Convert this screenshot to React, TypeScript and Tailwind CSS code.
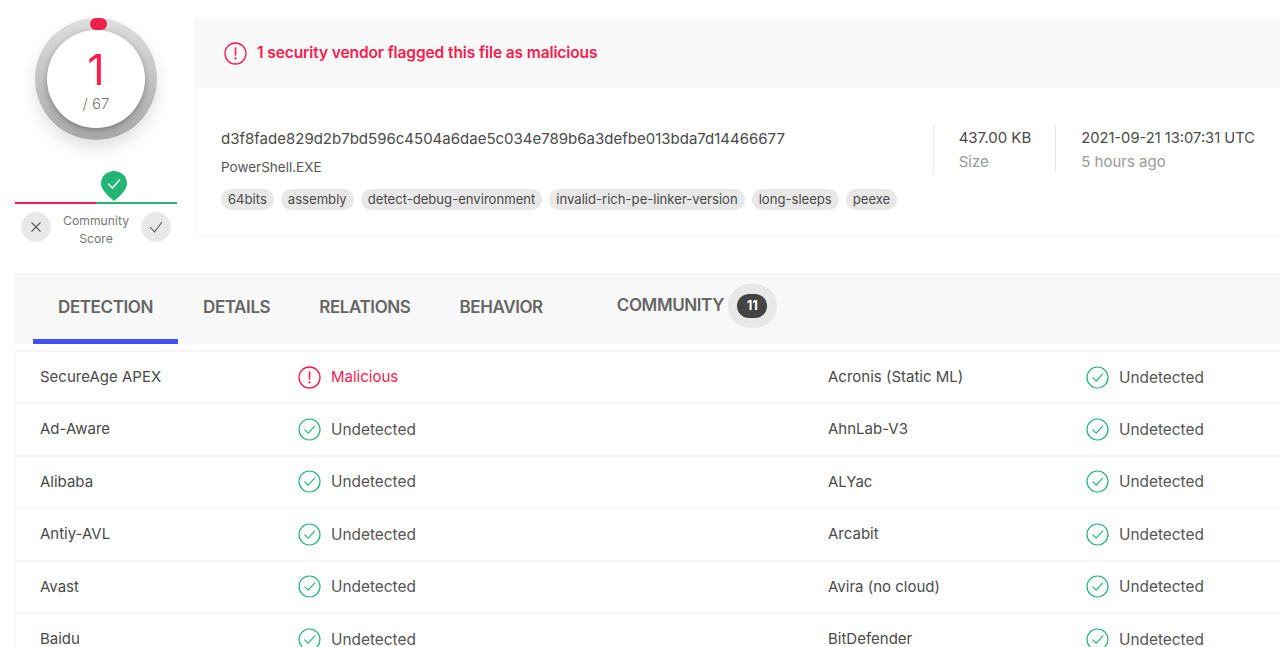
const tags = ['64bits', 'assembly', 'detect-debug-environment', 'invalid-rich-pe-linker-version', 'long-sleeps', 'peexe'];

const rows: [string, string, string, string][] = [
  ['SecureAge APEX', 'Malicious', 'Acronis (Static ML)', 'Undetected'],
  ['Ad-Aware', 'Undetected', 'AhnLab-V3', 'Undetected'],
  ['Alibaba', 'Undetected', 'ALYac', 'Undetected'],
  ['Antiy-AVL', 'Undetected', 'Arcabit', 'Undetected'],
  ['Avast', 'Undetected', 'Avira (no cloud)', 'Undetected'],
  ['Baidu', 'Undetected', 'BitDefender', 'Undetected'],
];

function AlertIcon() {
  return (
    <svg className="w-[23px] h-[23px] shrink-0" viewBox="0 0 23 23" fill="none" stroke="#ff1a4c" strokeWidth="1.3">
      <circle cx="11.5" cy="11.5" r="10.5" />
      <path d="M11.5 6v7" strokeWidth="1.6" strokeLinecap="round" />
      <circle cx="11.5" cy="16.4" r="0.5" />
    </svg>
  );
}

function CheckIcon() {
  return (
    <svg className="w-[23px] h-[23px] shrink-0" viewBox="0 0 23 23" fill="none" stroke="#22b573" strokeWidth="1.2">
      <circle cx="11.5" cy="11.5" r="10.5" />
      <path d="M6.8 11.8l3.4 3.4 6.4-7" strokeLinecap="round" strokeLinejoin="round" />
    </svg>
  );
}

function Verdict({ label }: { label: string }) {
  const bad = label === 'Malicious';
  return (
    <div className="flex items-center gap-[10px]">
      {bad ? <AlertIcon /> : <CheckIcon />}
      <span className={bad ? 'text-[15px] text-[#ff1a4c]' : 'text-[15.4px] text-[#555]'}>{label}</span>
    </div>
  );
}

function Sidebar() {
  return (
    <div className="w-[162px] shrink-0 flex flex-col items-center">
      <div className="relative mt-[18px] w-[122px] h-[122px] rounded-full bg-gradient-to-b from-[#dfdfdf] to-[#a8a8a8] shadow-[0_8px_16px_rgba(0,0,0,0.12)] flex items-center justify-center">
        <div className="absolute top-0 left-[55px] w-[17px] h-[12px] rounded-full bg-[#ee2049]" />
        <div className="w-[98px] h-[98px] rounded-full bg-white shadow-[0_2px_6px_rgba(0,0,0,0.3)] flex flex-col items-center">
          <span className="mt-[15px] text-[42px] leading-[50px] font-normal text-[#ff1a4c]">1</span>
          <span className="text-[15px] leading-[18px] font-light text-[#777]">/ 67</span>
        </div>
      </div>
      <div className="relative mt-[62px] w-full h-[2px] flex">
        <div className="w-1/2 bg-[#ff1a4c]" />
        <div className="w-1/2 bg-[#22b573]" />
        <svg className="absolute left-[86px] top-[-31px] w-[26px] h-[30px]" viewBox="0 0 26 30">
          <path d="M13 30C8 26 0 19 0 12.5 0 5 6 0 13 0s13 5 13 12.5C26 19 18 26 13 30z" fill="#22b573" />
          <path d="M7.5 13l4 4 7-8" fill="none" stroke="#fff" strokeWidth="1.4" strokeLinecap="round" strokeLinejoin="round" />
        </svg>
      </div>
      <div className="w-full mt-[7px] px-[6px] flex items-start justify-between">
        <div className="mt-[1px] w-[30px] h-[30px] rounded-full bg-[#e8e8e8] flex items-center justify-center">
          <svg className="w-[12px] h-[12px]" viewBox="0 0 12 12" fill="none" stroke="#555" strokeWidth="1.1">
            <path d="M1.5 1.5l9 9M10.5 1.5l-9 9" />
          </svg>
        </div>
        <div className="mt-[1px] text-[12.2px] leading-[18px] text-[#777] text-center">Community<br />Score</div>
        <div className="mt-[1px] w-[30px] h-[30px] rounded-full bg-[#e8e8e8] flex items-center justify-center">
          <svg className="w-[14px] h-[12px]" viewBox="0 0 14 12" fill="none" stroke="#555" strokeWidth="1.1">
            <path d="M1 6l4.5 5L13 1" />
          </svg>
        </div>
      </div>
    </div>
  );
}

function Summary() {
  return (
    <div className="flex-1 min-w-0 mt-[18px] h-[218px] border-b border-l border-[#f5f5f5] flex flex-col">
      <div className="h-[70px] bg-[#f9f9f9] pl-[28px] flex items-center gap-[10px]">
        <AlertIcon />
        <span className="text-[15.5px] font-semibold text-[#ff1a4c] tracking-[-0.1px]">1 security vendor flagged this file as malicious</span>
      </div>
      <div className="flex-1 pl-[25px] pr-[25px] pt-[39px] flex justify-between items-start whitespace-nowrap">
        <div>
          <div className="text-[15px] leading-[24px] text-[#4a4a4a]">d3f8fade829d2b7bd596c4504a6dae5c034e789b6a3defbe013bda7d14466677</div>
          <div className="mt-[7px] text-[13.5px] leading-[18px] text-[#555]">PowerShell.EXE</div>
          <div className="mt-[13px] flex gap-[7px]">
            {tags.map((t) => (
              <span key={t} className="h-[21px] px-[7px] rounded-full bg-[#e8e8e8] text-[13.1px] leading-[21px] text-[#4a4a4a]">{t}</span>
            ))}
          </div>
        </div>
        <div className="flex h-[48px] shrink-0 -mt-[2px]">
          <div className="pl-[25px] pr-[24px] pt-[1px] border-l border-[#e6e6e6]">
            <div className="text-[15px] leading-[24px] text-[#4a4a4a]">437.00 KB</div>
            <div className="text-[15px] leading-[24px] text-[#999]">Size</div>
          </div>
          <div className="pl-[25px] pt-[1px] border-l border-[#e6e6e6]">
            <div className="text-[14.7px] leading-[24px] text-[#4a4a4a]">2021-09-21 13:07:31 UTC</div>
            <div className="text-[15px] leading-[24px] text-[#999]">5 hours ago</div>
          </div>
        </div>
      </div>
    </div>
  );
}

function Tabs() {
  const tab = 'text-[17px] font-semibold text-[#666] tracking-[-0.4px]';
  return (
    <div className="mt-[25px] ml-[15px] h-[71px] bg-[#f8f8f8] flex items-stretch">
      <div className="ml-[18px] w-[145px] border-b-[5px] border-[#3f51f5] flex items-center justify-center pt-[3px]">
        <span className={tab}>DETECTION</span>
      </div>
      <div className="ml-[25px] flex items-center mb-[2px]">
        <span className={tab}>DETAILS</span>
      </div>
      <div className="ml-[49px] flex items-center mb-[2px]">
        <span className={tab}>RELATIONS</span>
      </div>
      <div className="ml-[49px] flex items-center mb-[2px]">
        <span className={tab}>BEHAVIOR</span>
      </div>
      <div className="ml-[74px] flex items-center gap-[4px] mb-[5px]">
        <span className={tab}>COMMUNITY</span>
        <div className="w-[49px] h-[44px] rounded-full bg-[#e8e8e8] flex items-center justify-center">
          <span className="w-[30px] h-[24px] rounded-full bg-[#444] text-white text-[13px] font-bold flex items-center justify-center">11</span>
        </div>
      </div>
    </div>
  );
}

function Table() {
  return (
    <div className="mt-[6px] ml-[15px] border-t-2 border-l border-[#f5f5f5] text-[15px] text-[#4a4a4a]">
      {rows.map((r) => (
        <div key={r[0]} className="h-[52.4px] border-b-2 border-[#f5f5f5] flex items-center">
          <div className="w-[282px] pl-[24px]">{r[0]}</div>
          <div className="w-[530px]"><Verdict label={r[1]} /></div>
          <div className="w-[258px]">{r[2]}</div>
          <Verdict label={r[3]} />
        </div>
      ))}
    </div>
  );
}

export default function App() {
  return (
    <div className="h-[647px] overflow-hidden bg-white font-['Inter','Liberation_Sans',sans-serif]">
      <div className="flex pl-[15px] gap-[18px]">
        <Sidebar />
        <Summary />
      </div>
      <Tabs />
      <Table />
    </div>
  );
}
